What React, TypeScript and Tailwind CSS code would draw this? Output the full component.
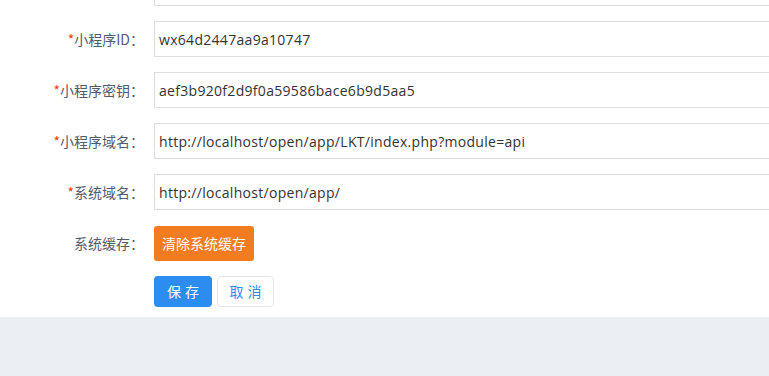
import React from "react";

const font = { fontFamily: '"Open Sans", "Noto Sans CJK SC", sans-serif' };
const cjk = { fontFamily: '"Noto Sans CJK SC", sans-serif' };

function Row({ label, required, value, first }: { label: string; required?: boolean; value?: string; first?: boolean }) {
  return (
    <div className={`flex items-center h-[36px] ${first ? "" : "mt-[15px]"}`}>
      <div className="w-[144px] shrink-0 text-right text-[14px] text-[#515a6e]" style={cjk}>
        {required && <span className="text-[#ed4014]">*</span>}
        {label}
      </div>
      <div className="ml-[10px] flex-1 h-[36px] border border-[#dcdee2] flex items-center pl-[4px] text-[14px] tracking-[0.3px] text-[#333] whitespace-nowrap overflow-hidden">
        {value}
      </div>
    </div>
  );
}

export default function App() {
  return (
    <div className="w-[769px] h-[376px] overflow-hidden bg-[#ebeef3]" style={font}>
      <div className="bg-white h-[317px] overflow-hidden">
        <div className="mt-[-30px] mr-[-20px]">
          <Row label="" value="" first />
          <Row label="小程序ID：" required value="wx64d2447aa9a10747" />
          <Row label="小程序密钥：" required value="aef3b920f2d9f0a59586bace6b9d5aa5" />
          <Row label="小程序域名：" required value="http://localhost/open/app/LKT/index.php?module=api" />
          <Row label="系统域名：" required value="http://localhost/open/app/" />
          <div className="flex items-center h-[36px] mt-[15px]">
            <div className="w-[144px] shrink-0 text-right text-[14px] text-[#515a6e]" style={cjk}>
              系统缓存：
            </div>
            <button className="ml-[10px] w-[100px] h-[35px] rounded-[3px] bg-[#f47c20] text-white text-[14px]" style={cjk}>
              清除系统缓存
            </button>
          </div>
          <div className="flex items-center mt-[15px] ml-[154px] gap-[5px]">
            <button className="w-[58px] h-[31px] rounded-[4px] bg-[#2d8cf0] text-white text-[14px] tracking-[4px] pl-[4px]" style={cjk}>
              保存
            </button>
            <button className="w-[57px] h-[31px] rounded-[4px] bg-white border border-[#e3e5e8] text-[#2d8cf0] text-[14px] tracking-[4px] pl-[4px]" style={cjk}>
              取消
            </button>
          </div>
        </div>
      </div>
    </div>
  );
}
